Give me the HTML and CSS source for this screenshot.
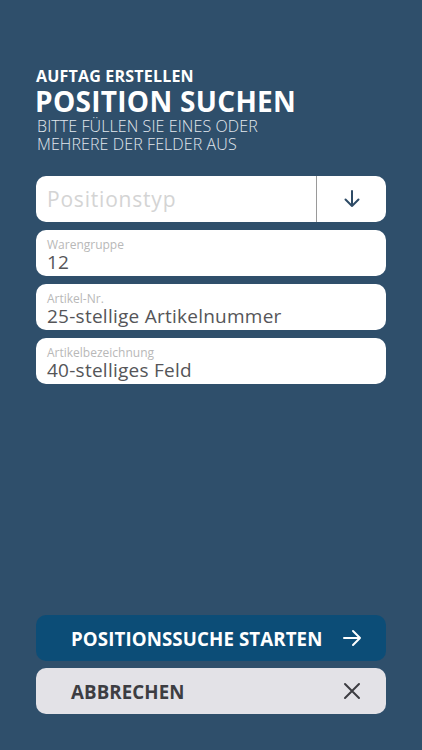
FILE: index.html
```html
<!DOCTYPE html>
<html lang="de">
<head>
<meta charset="utf-8">
<title>Position suchen</title>
<link rel="stylesheet" href="styles.css">
</head>
<body>
<main class="screen">
  <header class="head">
    <div class="kicker">AUFTAG ERSTELLEN</div>
    <h1 class="title">POSITION SUCHEN</h1>
    <p class="sub">BITTE FÜLLEN SIE EINES ODER<br>MEHRERE DER FELDER AUS</p>
  </header>
  <section class="fields">
    <div class="field select">
      <span class="placeholder">Positionstyp</span>
      <span class="sel-btn">
        <svg width="18" height="20" viewBox="0 0 18 20" fill="none" stroke="#2e4b66" stroke-width="2" stroke-linecap="round" stroke-linejoin="round"><path d="M9 2v15M2.5 10.5L9 17l6.5-6.5"/></svg>
      </span>
    </div>
    <div class="field">
      <span class="label">Warengruppe</span>
      <span class="value">12</span>
    </div>
    <div class="field">
      <span class="label">Artikel-Nr.</span>
      <span class="value">25-stellige Artikelnummer</span>
    </div>
    <div class="field">
      <span class="label">Artikelbezeichnung</span>
      <span class="value">40-stelliges Feld</span>
    </div>
  </section>
  <div class="spacer"></div>
  <section class="actions">
    <button class="btn primary">
      <span>POSITIONSSUCHE STARTEN</span>
      <svg width="20" height="18" viewBox="0 0 20 18" fill="none" stroke="#ffffff" stroke-width="2" stroke-linecap="round" stroke-linejoin="round"><path d="M2 9h16M11 2l7 7-7 7"/></svg>
    </button>
    <button class="btn secondary">
      <span>ABBRECHEN</span>
      <svg width="18" height="18" viewBox="0 0 18 18" fill="none" stroke="#3d3d42" stroke-width="2" stroke-linecap="round"><path d="M2 2l14 14M16 2L2 16"/></svg>
    </button>
  </section>
</main>
</body>
</html>
```

FILE: styles.css
```css
* { box-sizing: border-box; }
html, body { margin: 0; padding: 0; }
body {
  background: #2f4f6b;
  font-family: "Open Sans", "Noto Sans", sans-serif;
  width: 422px;
  height: 750px;
  overflow: hidden;
}
.screen {
  display: flex;
  flex-direction: column;
  height: 750px;
  padding: 66px 36px 36px 36px;
}
.head { color: #ffffff; }
.kicker {
  font-size: 16px;
  font-weight: 700;
  line-height: 20px;
  letter-spacing: 0.2px;
}
.title {
  margin: 0 0 0 -1px;
  font-size: 28px;
  font-weight: 700;
  line-height: 30px;
  letter-spacing: 0.3px;
}
.sub {
  margin: 1px 0 0 1px;
  font-size: 16px;
  font-weight: 300;
  line-height: 18px;
  letter-spacing: 0.1px;
  color: #e2e8ee;
}
.fields {
  margin-top: 23px;
  display: flex;
  flex-direction: column;
  gap: 8px;
}
.field {
  background: #ffffff;
  border-radius: 10px;
  height: 46px;
  display: flex;
  flex-direction: column;
  justify-content: flex-start;
  padding: 8px 12px 0 11px;
}
.field.select {
  flex-direction: row;
  align-items: center;
  justify-content: space-between;
  padding: 0 0 0 11px;
}
.placeholder {
  font-size: 21px;
  letter-spacing: 0.8px;
  color: #d4d4d4;
  font-weight: 400;
}
.sel-btn {
  width: 70px;
  height: 100%;
  border-left: 1px solid #9a9a9a;
  display: flex;
  align-items: center;
  justify-content: center;
}
.label {
  font-size: 12px;
  line-height: 14px;
  color: #b8b8b8;
}
.value {
  font-size: 19px;
  line-height: 20px;
  letter-spacing: 0.25px;
  color: #555558;
}
.spacer { flex: 1; }
.actions {
  display: flex;
  flex-direction: column;
  gap: 7px;
}
.btn {
  border: none;
  border-radius: 10px;
  height: 46px;
  display: flex;
  align-items: center;
  justify-content: space-between;
  padding: 0 24px 0 35px;
  font-family: "Open Sans", "Noto Sans", sans-serif;
  font-size: 18.7px;
  font-weight: 700;
  letter-spacing: 0.1px;
  width: 100%;
}
.btn.primary { background: #0c4d77; color: #ffffff; }
.btn.secondary { background: #e3e2e7; color: #3d3d42; padding-right: 25px; }
```
